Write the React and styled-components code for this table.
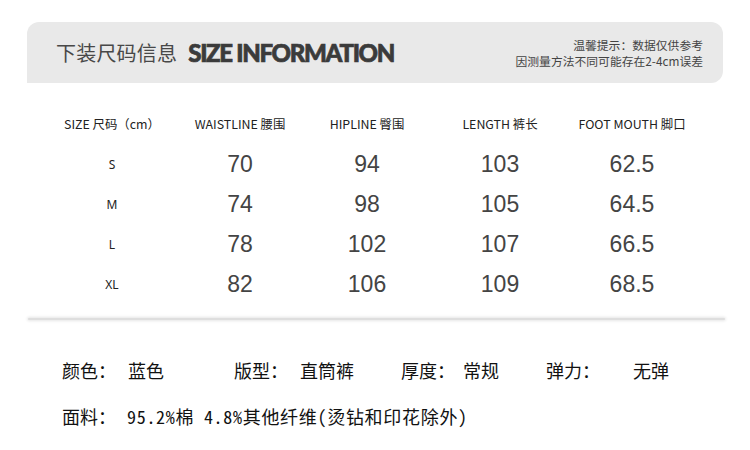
import React from "react";
import styled, { createGlobalStyle } from "styled-components";

const Global = createGlobalStyle`
  html, body { margin: 0; padding: 0; background: #ffffff; }
  body { width: 750px; height: 450px; overflow: hidden; font-family: "Noto Sans CJK SC", "Noto Sans", sans-serif; }
`;

const Page = styled.div`
  width: 750px;
  height: 450px;
  padding-top: 22px;
  box-sizing: border-box;
  display: flex;
  flex-direction: column;
`;

const Banner = styled.header`
  margin-left: 27px;
  width: 696px;
  height: 61px;
  background: #e9e9e9;
  border-radius: 12px 12px 12px 0;
  display: flex;
  align-items: center;
  justify-content: space-between;
  padding: 0 20px 0 29px;
  box-sizing: border-box;
`;

const TitleGroup = styled.div`
  display: flex;
  align-items: center;
  gap: 11px;
`;

const TitleCn = styled.span`
  font-family: "Noto Sans CJK SC", sans-serif;
  font-size: 20px;
  color: #484848;
  letter-spacing: 0.2px;
`;

const TitleEn = styled.span`
  font-family: "Lato", "Roboto", sans-serif;
  font-weight: 900;
  font-size: 24px;
  letter-spacing: -1.3px;
  color: #3b3b3b;
  -webkit-text-stroke: 0.7px #3b3b3b;
`;

const Notice = styled.div`
  display: flex;
  flex-direction: column;
  align-items: flex-end;
  font-family: "Noto Sans CJK SC", sans-serif;
  font-size: 11.8px;
  line-height: 16px;
  color: #444;
  margin-top: 1px;
`;

const Table = styled.div`
  margin-top: 21px;
  margin-left: 47px;
  display: grid;
  grid-template-columns: 130px 126px 128px 138px 126px;
  grid-auto-rows: 40px;
`;

const HeadCell = styled.div`
  display: flex;
  align-items: center;
  justify-content: center;
  font-family: "Noto Sans CJK SC", sans-serif;
  font-size: 12.4px;
  color: #222;
  white-space: nowrap;
  padding-bottom: 1px;
`;

const SizeCell = styled.div`
  display: flex;
  align-items: center;
  justify-content: center;
  font-family: "Noto Sans", sans-serif;
  font-size: 12px;
  color: #222;
`;

const NumCell = styled.div`
  display: flex;
  align-items: center;
  justify-content: center;
  font-family: "Liberation Sans", "Noto Sans", sans-serif;
  font-size: 23px;
  color: #444;
`;

const Divider = styled.div`
  margin-top: 14px;
  margin-left: 28px;
  width: 697px;
  height: 2px;
  background: #dedede;
  box-shadow: 0 0 3px 1px #e6e6e6;
  border-radius: 2px;
`;

const Specs = styled.div`
  margin-top: 37px;
  padding-left: 62px;
  display: flex;
  flex-direction: column;
  gap: 20px;
  font-family: "Noto Sans Mono CJK SC", "Noto Sans CJK SC", monospace;
  font-size: 18px;
  line-height: 26px;
  color: #111;
`;

const SpecRow = styled.div`
  display: flex;
`;

const Pair = styled.div`
  display: flex;
  width: ${(p) => (p.$w ? `${p.$w}px` : "auto")};
`;

const Value = styled.span`
  margin-left: ${(p) => p.$gap}px;
  letter-spacing: ${(p) => p.$spacing || 0}px;
  white-space: nowrap;
`;

const headers = [
  "SIZE 尺码（cm）",
  "WAISTLINE 腰围",
  "HIPLINE 臀围",
  "LENGTH 裤长",
  "FOOT MOUTH 脚口",
];

const rows = [
  ["S", "70", "94", "103", "62.5"],
  ["M", "74", "98", "105", "64.5"],
  ["L", "78", "102", "107", "66.5"],
  ["XL", "82", "106", "109", "68.5"],
];

export default function App() {
  return (
    <Page>
      <Global />
      <Banner>
        <TitleGroup>
          <TitleCn>下装尺码信息</TitleCn>
          <TitleEn>SIZE INFORMATION</TitleEn>
        </TitleGroup>
        <Notice>
          <span>温馨提示：数据仅供参考</span>
          <span>因测量方法不同可能存在2-4cm误差</span>
        </Notice>
      </Banner>
      <Table>
        {headers.map((h) => (
          <HeadCell key={h}>{h}</HeadCell>
        ))}
        {rows.map((r) => (
          <React.Fragment key={r[0]}>
            <SizeCell>{r[0]}</SizeCell>
            {r.slice(1).map((v, i) => (
              <NumCell key={i}>{v}</NumCell>
            ))}
          </React.Fragment>
        ))}
      </Table>
      <Divider />
      <Specs>
        <SpecRow>
          <Pair $w={172}>
            <span>颜色：</span>
            <Value $gap={12}>蓝色</Value>
          </Pair>
          <Pair $w={167}>
            <span>版型：</span>
            <Value $gap={12}>直筒裤</Value>
          </Pair>
          <Pair $w={145}>
            <span>厚度：</span>
            <Value $gap={8}>常规</Value>
          </Pair>
          <Pair>
            <span>弹力：</span>
            <Value $gap={33}>无弹</Value>
          </Pair>
        </SpecRow>
        <SpecRow>
          <Pair>
            <span>面料：</span>
            <Value $gap={11} $spacing={0.7}>95.2%棉 4.8%其他纤维(烫钻和印花除外)</Value>
          </Pair>
        </SpecRow>
      </Specs>
    </Page>
  );
}
